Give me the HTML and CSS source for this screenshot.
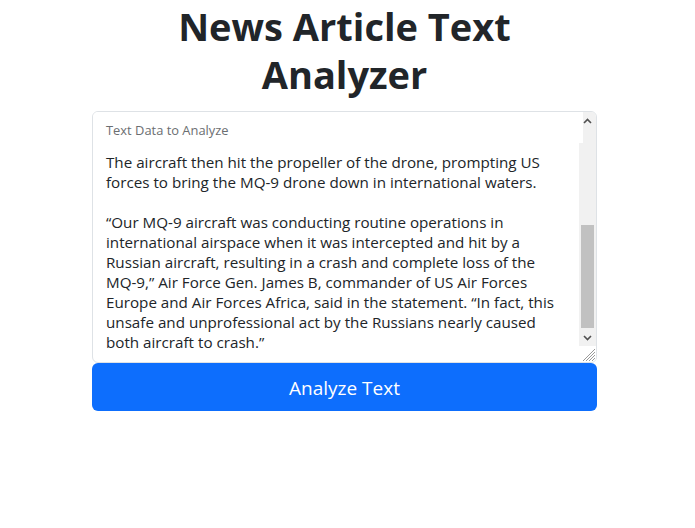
FILE: index.html
```
<!DOCTYPE html>
<html lang="en">
<head>
<meta charset="utf-8">
<title>News Article Text Analyzer</title>
<link rel="stylesheet" href="styles.css">
</head>
<body>
<main class="page">
  <h1 class="title">News Article Text<br>Analyzer</h1>
  <form class="analyzer">
    <div class="field">
      <div class="field-text">
        <div class="line">The aircraft then hit the propeller of the drone, prompting US</div>
        <div class="line">forces to bring the MQ-9 drone down in international waters.</div>
        <div class="line">&nbsp;</div>
        <div class="line">“Our MQ-9 aircraft was conducting routine operations in</div>
        <div class="line">international airspace when it was intercepted and hit by a</div>
        <div class="line">Russian aircraft, resulting in a crash and complete loss of the</div>
        <div class="line">MQ-9,” Air Force Gen. James B, commander of US Air Forces</div>
        <div class="line">Europe and Air Forces Africa, said in the statement. “In fact, this</div>
        <div class="line">unsafe and unprofessional act by the Russians nearly caused</div>
        <div class="line">both aircraft to crash.”</div>
      </div>
      <div class="scrollbar">
        <div class="sb-btn">
          <svg width="9" height="6" viewBox="0 0 9 6"><path d="M1 5 L4.5 1.5 L8 5" fill="none" stroke="#505050" stroke-width="1.6"/></svg>
        </div>
        <div class="sb-track">
          <div class="sb-space"></div>
          <div class="sb-thumb"></div>
        </div>
        <div class="sb-btn">
          <svg width="9" height="6" viewBox="0 0 9 6"><path d="M1 1 L4.5 4.5 L8 1" fill="none" stroke="#505050" stroke-width="1.6"/></svg>
        </div>
        <div class="sb-corner">
          <svg width="15" height="15" viewBox="0 0 15 15"><path d="M14 2 L2 14 M14 5 L5 14 M14 8 L8 14 M14 11 L11 14" stroke="#9a9a9a" stroke-width="1"/></svg>
        </div>
      </div>
      <label class="field-label">Text Data to Analyze</label>
    </div>
    <button type="button" class="btn">Analyze Text</button>
  </form>
</main>
</body>
</html>
```
FILE: styles.css
```
* { box-sizing: border-box; }
html, body { margin: 0; padding: 0; background: #fff; }
body {
  font-family: "Open Sans", "Noto Sans", sans-serif;
  color: #212529;
}
.page {
  width: 505px;
  margin-left: 92px;
}
.title {
  margin: 0 0 13px;
  padding-top: 2px;
  font-size: 38px;
  line-height: 48px;
  font-weight: 700;
  text-align: center;
  color: #212529;
}
.analyzer {
  display: flex;
  flex-direction: column;
}
.field {
  position: relative;
  display: flex;
  height: 252px;
  border: 1px solid #dee2e6;
  border-radius: 6px;
  overflow: hidden;
}
.field-text {
  flex: 1;
  padding: 40px 0 0 13px;
  font-size: 15.2px;
  line-height: 20px;
  overflow: hidden;
}
.line { white-space: nowrap; }
.scrollbar {
  width: 17px;
  display: flex;
  flex-direction: column;
  background: #f1f1f1;
}
.sb-btn {
  height: 17px;
  display: flex;
  align-items: center;
  justify-content: center;
}
.sb-track {
  flex: 1;
  display: flex;
  flex-direction: column;
}
.sb-space { height: 96px; }
.sb-thumb {
  flex: 1;
  margin: 0 2px 1px;
  background: #c1c1c1;
}
.sb-corner {
  height: 16px;
  background: #fff;
  display: flex;
  align-items: flex-end;
  justify-content: flex-end;
}
.field-label {
  position: absolute;
  top: 0;
  left: 0;
  right: 13px;
  height: 31px;
  padding: 10px 0 0 13px;
  background: #fff;
  font-size: 12.9px;
  line-height: 16px;
  color: #6b6e71;
}
.btn {
  height: 48px;
  border: 0;
  border-radius: 6px;
  background: #0d6efd;
  color: #fff;
  font-family: "Open Sans", "Noto Sans", sans-serif;
  font-size: 19px;
  line-height: 24px;
  padding: 2px 0 0;
  cursor: pointer;
}
```
